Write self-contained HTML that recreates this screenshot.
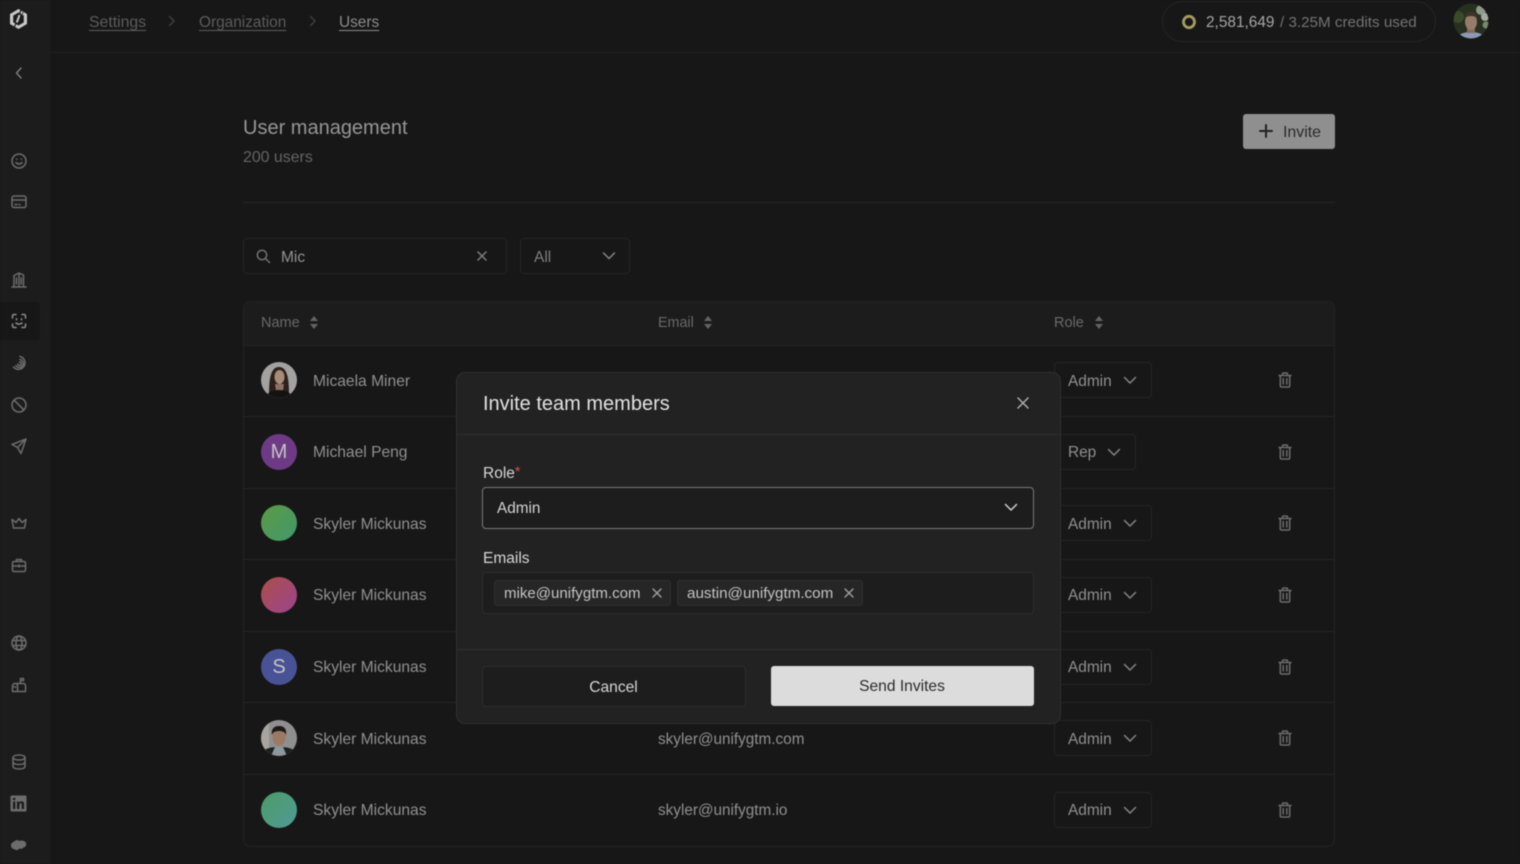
<!DOCTYPE html>
<html><head><meta charset="utf-8"><title>User management</title>
<style>
html,body{margin:0;padding:0;width:1520px;height:864px;overflow:hidden;background:#171717;font-family:"Liberation Sans",sans-serif;color:#8a8a8a}
*{box-sizing:border-box}
#w{position:absolute;left:0;top:0;width:1520px;height:864px;overflow:hidden;background:#171717;filter:blur(.4px)}
.a{position:absolute}
.t{position:absolute;white-space:nowrap;line-height:20px;font-size:15px;margin-top:1px}
.ic{position:absolute;fill:none;stroke:#6c6c6c;stroke-width:1.5;stroke-linecap:round;stroke-linejoin:round}
.line{position:absolute;left:244px;width:1090px;height:1px;background:#242424}
.av{position:absolute;left:261px;width:36px;height:36px;border-radius:50%;text-align:center;line-height:37px;font-size:20px;color:#c4c4c4}
.name{left:313px;color:#909090;font-size:15.6px}
.sel{position:absolute;left:1054px;height:36px;border:1px solid #252525;border-radius:4px}
.role{left:1068px;color:#909090;font-size:15.4px}
</style></head><body><div id="w">

<!-- sidebar -->
<div class="a" style="left:0;top:0;width:50px;height:864px;background:#1c1c1c;border-right:1px solid #1f1f1f"></div>
<div class="a" style="left:50px;top:52px;width:1470px;height:1px;background:#202020"></div>
<div class="a" style="left:0;top:302px;width:40px;height:38px;background:#171717;border-radius:0 4px 4px 0"></div>

<svg class="a" style="left:8px;top:8px" width="21" height="22" viewBox="0 0 21 22" fill="none"><path d="M10.500 1 19 6V16L10.500 21 2 16V6Z" fill="#c8c8c8"/><path d="M10.500 4.500 15.800 7.600V14.400L10.500 17.500 5.200 14.400V7.600Z" fill="#1c1c1c"/><path d="M13 2 6.500 19" stroke="#1c1c1c" stroke-width="1.200"/><path d="M11.500 7 8.800 14.500" stroke="#c8c8c8" stroke-width="2"/><path d="M15 4 11 17" stroke="#1c1c1c" stroke-width=".8"/></svg>
<svg class="ic" style="left:12px;top:66px;stroke:#7c7c7c" width="14" height="14" viewBox="0 0 14 14"><path d="M9 2 4.500 7 9 12"/></svg>
<!-- smile -->
<svg class="ic" style="left:10px;top:152px" width="18" height="18" viewBox="0 0 18 18"><circle cx="9" cy="9" r="7"/><path d="M6 10.500c1.500 2 4.500 2 6 0M6.700 7h.1M11.300 7h.1"/></svg>
<!-- card -->
<svg class="ic" style="left:10px;top:193px" width="18" height="18" viewBox="0 0 18 18"><rect x="2" y="3" width="14" height="11.500" rx="2"/><path d="M2 7h14M5 11.500h2M9 11.500h1"/></svg>
<!-- building -->
<svg class="ic" style="left:10px;top:271px" width="18" height="18" viewBox="0 0 18 18"><path d="M2 16h14M4 16V4.500l5-2.500 4.500 2V16M9 2v14M6.500 7v6M11.300 7v6"/></svg>
<!-- face scan -->
<svg class="ic" style="left:10px;top:312px;stroke:#8c8c8c" width="18" height="18" viewBox="0 0 18 18"><path d="M2.500 6V4a1.500 1.500 0 0 1 1.500-1.500h2M12 2.500h2A1.500 1.500 0 0 1 15.500 4v2M15.500 12v2a1.500 1.500 0 0 1-1.500 1.500h-2M6 15.500H4A1.500 1.500 0 0 1 2.500 14v-2M6.500 6.700v1M11.500 6.700v1M6 11c1.800 1.500 4.200 1.500 6 0"/></svg>
<!-- spiral -->
<svg class="ic" style="left:10px;top:354px" width="18" height="18" viewBox="0 0 18 18"><path d="M10 2.500A6.500 6.500 0 1 1 3.500 13M10 5.500A4 4 0 1 1 5.800 11.500M9.500 8A1.700 1.700 0 1 1 7.800 10.200"/></svg>
<!-- ban -->
<svg class="ic" style="left:10px;top:396px" width="18" height="18" viewBox="0 0 18 18"><circle cx="9" cy="9" r="7"/><path d="M4.200 4.200 13.800 13.800"/></svg>
<!-- send -->
<svg class="ic" style="left:10px;top:437px" width="18" height="18" viewBox="0 0 18 18"><path d="M16 2 2 7.500 7.500 10.500 11 16.500ZM7.500 10.500 16 2"/></svg>
<!-- crown -->
<svg class="ic" style="left:10px;top:514px" width="18" height="18" viewBox="0 0 18 18"><path d="M3.500 14h11L16 5.500l-4 3L9 4.500 6 8.500l-4-3Z"/></svg>
<!-- briefcase -->
<svg class="ic" style="left:10px;top:556px" width="18" height="18" viewBox="0 0 18 18"><rect x="2.500" y="5.500" width="13" height="10" rx="1.500"/><path d="M6.500 5.500V3.500h5v2M2.500 10h13M9 9v2"/></svg>
<!-- globe -->
<svg class="ic" style="left:10px;top:634px" width="18" height="18" viewBox="0 0 18 18"><circle cx="9" cy="9" r="7"/><ellipse cx="9" cy="9" rx="3" ry="7"/><path d="M2.500 6.500h13M2.500 11.500h13"/></svg>
<!-- mailbox -->
<svg class="ic" style="left:10px;top:676px" width="18" height="18" viewBox="0 0 18 18"><path d="M2.500 15.500V10a2.500 2.500 0 0 1 2.500-2.500h8.500a2 2 0 0 1 2 2v6ZM5 7.500A2.500 2.500 0 0 1 7.500 10v5.500M10.500 7.500V2.500h3v2h-3M4 11h1.500"/></svg>
<!-- database -->
<svg class="ic" style="left:10px;top:753px" width="18" height="18" viewBox="0 0 18 18"><ellipse cx="9" cy="4.500" rx="6" ry="2.500"/><path d="M3 4.500v9C3 15 5.700 16 9 16s6-1 6-2.500v-9M3 9c0 1.500 2.700 2.500 6 2.500S15 10.500 15 9"/></svg>
<!-- linkedin -->
<svg class="a" style="left:10px;top:795px" width="17" height="17" viewBox="0 0 17 17"><rect x=".5" y=".5" width="16" height="16" rx="1" fill="#6c6c6c"/><rect x="3" y="6.500" width="2.300" height="7.500" fill="#1c1c1c"/><circle cx="4.150" cy="4" r="1.300" fill="#1c1c1c"/><path d="M7 6.500h2.200v1.100c.6-.9 1.400-1.300 2.400-1.300 1.800 0 2.400 1.200 2.400 3V14h-2.300V9.800c0-.9-.3-1.500-1.100-1.500-.8 0-1.300.6-1.300 1.500V14H7Z" fill="#1c1c1c"/></svg>
<!-- salesforce cloud -->
<svg class="a" style="left:10px;top:838px" width="17" height="15" viewBox="0 0 17 14"><path d="M1 7c0-2 1-3 2.500-3.500C5 1.500 8 1 9.500 2.500c1.500-1 5.500-.5 6.500 2 .8 2-.5 4-2.500 4.500-1 1.500-3 1.500-4 1-1.500 2-4.500 2-5 .5C2.500 11 1 9 1 7Z" fill="#6c6c6c"/></svg>

<!-- top bar -->
<span class="t" style="left:89px;top:12px;color:#5c5c5c;font-size:15.800px;text-decoration:underline;text-underline-offset:3px;text-decoration-thickness:1px">Settings</span>
<svg class="ic" style="left:165px;top:14px;stroke:#3e3e3e" width="14" height="14" viewBox="0 0 14 14"><path d="M4.500 2.500 9 7 4.500 11.500"/></svg>
<span class="t" style="left:199px;top:12px;color:#5c5c5c;font-size:15.400px;text-decoration:underline;text-underline-offset:3px;text-decoration-thickness:1px">Organization</span>
<svg class="ic" style="left:306px;top:14px;stroke:#3e3e3e" width="14" height="14" viewBox="0 0 14 14"><path d="M4.500 2.500 9 7 4.500 11.500"/></svg>
<span class="t" style="left:339px;top:12px;color:#8c8c8c;font-size:15.400px;text-decoration:underline;text-underline-offset:3px;text-decoration-thickness:1px">Users</span>

<div class="a" style="left:1162px;top:1px;width:274px;height:41px;border:1px solid #242424;border-radius:21px"></div>
<svg class="a" style="left:1181px;top:14px" width="16" height="16" viewBox="0 0 16 16" fill="none"><ellipse cx="8" cy="8" rx="5.500" ry="5.700" stroke="#a89a60" stroke-width="2.800"/><path d="M4.500 6.500C5.500 4.800 7.500 4.500 9.500 5.500" stroke="#1c1c1c" stroke-width=".8"/></svg>
<span class="t" style="left:1206px;top:12px;color:#a6a6a6;font-size:15.400px">2,581,649</span>
<span class="t" style="left:1280px;top:12px;color:#737373;font-size:15.200px">/ 3.25M credits used</span>
<svg class="a" style="left:1453px;top:3px" width="36" height="36" viewBox="0 0 36 36"><defs><clipPath id="c1"><circle cx="18" cy="18" r="17.500"/></clipPath></defs><g clip-path="url(#c1)"><rect width="36" height="36" fill="#28301f"/><circle cx="5" cy="14" r="6" fill="#3a4a2a"/><circle cx="28" cy="7" r="5" fill="#8d9a8a"/><circle cx="32" cy="14" r="4" fill="#a3aba0"/><circle cx="33" cy="22" r="3.500" fill="#79876f"/><path d="M4 36c1-5 7-7 14-7s13 2 14 7Z" fill="#8b9bb5"/><rect x="14" y="24" width="8" height="6" fill="#86695a"/><ellipse cx="18" cy="19" rx="6" ry="8" fill="#977b6b"/><path d="M11.500 17c-.5-6 3-8.500 6.500-8.500s7 2.500 6.500 8.500c-1-3-3-4-6.500-4s-5.500 1-6.500 4Z" fill="#3f3226"/></g></svg>

<!-- header -->
<span class="t" style="left:243px;top:115px;font-size:20px;line-height:24px;color:#969696">User management</span>
<span class="t" style="left:243px;top:147px;color:#646464;font-size:15.900px">200 users</span>
<div class="a" style="left:1243px;top:114px;width:92px;height:35px;background:#8f8f8f;border-radius:3px"></div>
<svg class="ic" style="left:1258px;top:123px;stroke:#222;stroke-width:2" width="16" height="16" viewBox="0 0 16 16"><path d="M8 2v12M2 8h12"/></svg>
<span class="t" style="left:1283px;top:122px;color:#2a2a2a;font-size:15.900px">Invite</span>
<div class="a" style="left:243px;top:202px;width:1092px;height:1px;background:#262626"></div>

<!-- filters -->
<div class="a" style="left:243px;top:238px;width:264px;height:36px;border:1px solid #242424;border-radius:4px"></div>
<svg class="ic" style="left:255px;top:248px;stroke:#707070" width="16" height="16" viewBox="0 0 16 16"><circle cx="7" cy="7" r="4.700"/><path d="M10.500 10.500 14.500 14.500"/></svg>
<span class="t" style="left:281px;top:247px;color:#929292;font-size:15.500px">Mic</span>
<svg class="ic" style="left:475px;top:249px;stroke:#7c7c7c" width="14" height="14" viewBox="0 0 14 14"><path d="M3 3 11 11M11 3 3 11"/></svg>
<div class="a" style="left:520px;top:238px;width:110px;height:36px;border:1px solid #242424;border-radius:4px"></div>
<span class="t" style="left:534px;top:247px;color:#7e7e7e;font-size:15.500px">All</span>
<svg class="ic" style="left:601px;top:248px;stroke:#858585" width="16" height="16" viewBox="0 0 16 16"><path d="M2.500 5 8 10.500 13.500 5"/></svg>

<!-- table -->
<div class="a" style="left:243px;top:301px;width:1092px;height:546px;border:1px solid #232323;border-radius:7px"></div>
<div class="a" style="left:244px;top:302px;width:1090px;height:43px;background:#1c1c1c;border-radius:6px 6px 0 0"></div>
<div class="line" style="top:345px"></div><div class="line" style="top:416px"></div><div class="line" style="top:488px"></div><div class="line" style="top:559px"></div><div class="line" style="top:631px"></div><div class="line" style="top:702px"></div><div class="line" style="top:774px"></div>

<span class="t" style="left:261px;top:312px;color:#6a6a6a;font-size:14.500px">Name</span>
<svg class="a" style="left:309px;top:315px" width="10" height="15" viewBox="0 0 10 15"><path d="M5 1 9 6H1ZM5 14 1 9H9Z" fill="#646464"/></svg>
<span class="t" style="left:658px;top:312px;color:#6a6a6a;font-size:14.300px">Email</span>
<svg class="a" style="left:703px;top:315px" width="10" height="15" viewBox="0 0 10 15"><path d="M5 1 9 6H1ZM5 14 1 9H9Z" fill="#646464"/></svg>
<span class="t" style="left:1054px;top:312px;color:#6a6a6a;font-size:14.500px">Role</span>
<svg class="a" style="left:1094px;top:315px" width="10" height="15" viewBox="0 0 10 15"><path d="M5 1 9 6H1ZM5 14 1 9H9Z" fill="#646464"/></svg>

<!-- avatars -->
<svg class="a" style="left:261px;top:362px" width="36" height="36" viewBox="0 0 36 36"><defs><clipPath id="c2"><circle cx="18" cy="18" r="18"/></clipPath></defs><g clip-path="url(#c2)"><rect width="36" height="36" fill="#a2a2a2"/><path d="M8 32c0-16 2-27 10-27s10 11 10 27Z" fill="#2c211b"/><ellipse cx="18.500" cy="15" rx="5" ry="7" fill="#a98a78"/><path d="M14 22h9l-1 7H15Z" fill="#8f7262"/><path d="M5 36c1-6 6-8 13-8s12 2 13 8Z" fill="#141312"/></g></svg>
<div class="av" style="top:434px;background:#6e3a85">M</div>
<div class="av" style="top:505px;background:linear-gradient(135deg,#5c9a45,#42996c)"></div>
<div class="av" style="top:577px;background:linear-gradient(135deg,#ab4f47,#9c4490)"></div>
<div class="av" style="top:649px;background:#4a5297">S</div>
<svg class="a" style="left:261px;top:720px" width="36" height="36" viewBox="0 0 36 36"><defs><clipPath id="c3"><circle cx="18" cy="18" r="18"/></clipPath></defs><g clip-path="url(#c3)"><rect width="36" height="36" fill="#8f8f8f"/><rect x="0" y="0" width="8" height="36" fill="#a8a4a0"/><path d="M0 36c1-7 8-9 18-9s17 2 18 9Z" fill="#1c2022"/><path d="M10 36l4-9h8l4 9Z" fill="#8e979c"/><ellipse cx="18" cy="17" rx="6.500" ry="9" fill="#9a7a64"/><path d="M11 15c-1-7 3-9 7-9s8 2 7 9c-1-3-3-4-7-4s-6 1-7 4Z" fill="#1d1715"/></g></svg>
<div class="av" style="top:792px;background:linear-gradient(135deg,#4d9c68,#4f9a96)"></div>

<span class="t name" style="top:371px">Micaela Miner</span>
<span class="t name" style="top:442px">Michael Peng</span>
<span class="t name" style="top:514px">Skyler Mickunas</span>
<span class="t name" style="top:585px">Skyler Mickunas</span>
<span class="t name" style="top:657px">Skyler Mickunas</span>
<span class="t name" style="top:729px">Skyler Mickunas</span>
<span class="t name" style="top:800px">Skyler Mickunas</span>

<span class="t" style="left:658px;top:729px;color:#909090;font-size:15.300px">skyler@unifygtm.com</span>
<span class="t" style="left:658px;top:800px;color:#909090;font-size:15.300px">skyler@unifygtm.io</span>

<!-- role selects -->
<div class="sel" style="top:362px;width:98px"></div>
<div class="sel" style="top:434px;width:82px"></div>
<div class="sel" style="top:505px;width:98px"></div>
<div class="sel" style="top:577px;width:98px"></div>
<div class="sel" style="top:649px;width:98px"></div>
<div class="sel" style="top:720px;width:98px"></div>
<div class="sel" style="top:792px;width:98px"></div>
<span class="t role" style="top:371px">Admin</span>
<span class="t role" style="top:442px">Rep</span>
<span class="t role" style="top:514px">Admin</span>
<span class="t role" style="top:585px">Admin</span>
<span class="t role" style="top:657px">Admin</span>
<span class="t role" style="top:729px">Admin</span>
<span class="t role" style="top:800px">Admin</span>
<svg class="ic" style="left:1122px;top:372px;stroke:#858585" width="16" height="16" viewBox="0 0 16 16"><path d="M2.500 5.500 8 11 13.500 5.500"/></svg>
<svg class="ic" style="left:1106px;top:444px;stroke:#858585" width="16" height="16" viewBox="0 0 16 16"><path d="M2.500 5.500 8 11 13.500 5.500"/></svg>
<svg class="ic" style="left:1122px;top:515px;stroke:#858585" width="16" height="16" viewBox="0 0 16 16"><path d="M2.500 5.500 8 11 13.500 5.500"/></svg>
<svg class="ic" style="left:1122px;top:587px;stroke:#858585" width="16" height="16" viewBox="0 0 16 16"><path d="M2.500 5.500 8 11 13.500 5.500"/></svg>
<svg class="ic" style="left:1122px;top:659px;stroke:#858585" width="16" height="16" viewBox="0 0 16 16"><path d="M2.500 5.500 8 11 13.500 5.500"/></svg>
<svg class="ic" style="left:1122px;top:730px;stroke:#858585" width="16" height="16" viewBox="0 0 16 16"><path d="M2.500 5.500 8 11 13.500 5.500"/></svg>
<svg class="ic" style="left:1122px;top:802px;stroke:#858585" width="16" height="16" viewBox="0 0 16 16"><path d="M2.500 5.500 8 11 13.500 5.500"/></svg>

<!-- trash -->
<svg class="ic" style="left:1276px;top:371px" width="18" height="18" viewBox="0 0 18 18"><path d="M3 4.500h12M6.500 4.500V3a1 1 0 0 1 1-1h3a1 1 0 0 1 1 1v1.500M4.300 4.500v10.200a1.300 1.300 0 0 0 1.300 1.300h6.800a1.300 1.300 0 0 0 1.300-1.300V4.500M7.200 7.500v5.500M10.800 7.500v5.500"/></svg>
<svg class="ic" style="left:1276px;top:443px" width="18" height="18" viewBox="0 0 18 18"><path d="M3 4.500h12M6.500 4.500V3a1 1 0 0 1 1-1h3a1 1 0 0 1 1 1v1.500M4.300 4.500v10.200a1.300 1.300 0 0 0 1.300 1.300h6.800a1.300 1.300 0 0 0 1.300-1.300V4.500M7.200 7.500v5.500M10.800 7.500v5.500"/></svg>
<svg class="ic" style="left:1276px;top:514px" width="18" height="18" viewBox="0 0 18 18"><path d="M3 4.500h12M6.500 4.500V3a1 1 0 0 1 1-1h3a1 1 0 0 1 1 1v1.500M4.300 4.500v10.200a1.300 1.300 0 0 0 1.300 1.300h6.800a1.300 1.300 0 0 0 1.300-1.300V4.500M7.200 7.500v5.500M10.800 7.500v5.500"/></svg>
<svg class="ic" style="left:1276px;top:586px" width="18" height="18" viewBox="0 0 18 18"><path d="M3 4.500h12M6.500 4.500V3a1 1 0 0 1 1-1h3a1 1 0 0 1 1 1v1.500M4.300 4.500v10.200a1.300 1.300 0 0 0 1.300 1.300h6.800a1.300 1.300 0 0 0 1.300-1.300V4.500M7.200 7.500v5.500M10.800 7.500v5.500"/></svg>
<svg class="ic" style="left:1276px;top:658px" width="18" height="18" viewBox="0 0 18 18"><path d="M3 4.500h12M6.500 4.500V3a1 1 0 0 1 1-1h3a1 1 0 0 1 1 1v1.500M4.300 4.500v10.200a1.300 1.300 0 0 0 1.300 1.300h6.800a1.300 1.300 0 0 0 1.300-1.300V4.500M7.200 7.500v5.500M10.800 7.500v5.500"/></svg>
<svg class="ic" style="left:1276px;top:729px" width="18" height="18" viewBox="0 0 18 18"><path d="M3 4.500h12M6.500 4.500V3a1 1 0 0 1 1-1h3a1 1 0 0 1 1 1v1.500M4.300 4.500v10.200a1.300 1.300 0 0 0 1.300 1.300h6.800a1.300 1.300 0 0 0 1.300-1.300V4.500M7.200 7.500v5.500M10.800 7.500v5.500"/></svg>
<svg class="ic" style="left:1276px;top:801px" width="18" height="18" viewBox="0 0 18 18"><path d="M3 4.500h12M6.500 4.500V3a1 1 0 0 1 1-1h3a1 1 0 0 1 1 1v1.500M4.300 4.500v10.200a1.300 1.300 0 0 0 1.300 1.300h6.800a1.300 1.300 0 0 0 1.300-1.300V4.500M7.200 7.500v5.500M10.800 7.500v5.500"/></svg>

<!-- modal -->
<div class="a" style="left:456px;top:372px;width:605px;height:352px;background:#222;border:1px solid #2f2f2f;border-radius:9px"></div>
<div class="a" style="left:457px;top:434px;width:603px;height:1px;background:#303030"></div>
<div class="a" style="left:457px;top:649px;width:603px;height:1px;background:#303030"></div>
<span class="t" style="left:483px;top:391px;font-size:20px;line-height:24px;color:#e2e2e2">Invite team members</span>
<svg class="ic" style="left:1015px;top:395px;stroke:#adadad" width="16" height="16" viewBox="0 0 16 16"><path d="M3 3 13 13M13 3 3 13"/></svg>

<span class="t" style="left:483px;top:462px;font-size:15.500px;color:#d6d6d6">Role<span style="color:#d9534f;font-size:14px;position:relative;top:-2px">*</span></span>
<div class="a" style="left:482px;top:487px;width:552px;height:42px;background:#1d1d1d;border:1px solid #7a7a7a;border-radius:4px"></div>
<span class="t" style="left:497px;top:498px;font-size:15.300px;color:#d4d4d4">Admin</span>
<svg class="ic" style="left:1003px;top:499px;stroke:#cecece" width="16" height="16" viewBox="0 0 16 16"><path d="M2.500 5.500 8 11 13.500 5.500"/></svg>

<span class="t" style="left:483px;top:548px;font-size:15.500px;color:#d6d6d6">Emails</span>
<div class="a" style="left:482px;top:572px;width:552px;height:42px;background:#1d1d1d;border:1px solid #2d2d2d;border-radius:4px"></div>
<div class="a" style="left:494px;top:580px;width:177px;height:26px;background:#262626;border:1px solid #2e2e2e;border-radius:3px"></div>
<span class="t" style="left:504px;top:583px;font-size:15.060px;color:#c4c4c4">mike@unifygtm.com</span>
<svg class="ic" style="left:651px;top:587px;stroke:#9c9c9c" width="12" height="12" viewBox="0 0 12 12"><path d="M2 2 10 10M10 2 2 10"/></svg>
<div class="a" style="left:677px;top:580px;width:186px;height:26px;background:#262626;border:1px solid #2e2e2e;border-radius:3px"></div>
<span class="t" style="left:687px;top:583px;font-size:15.200px;color:#c4c4c4">austin@unifygtm.com</span>
<svg class="ic" style="left:843px;top:587px;stroke:#9c9c9c" width="12" height="12" viewBox="0 0 12 12"><path d="M2 2 10 10M10 2 2 10"/></svg>

<div class="a" style="left:482px;top:666px;width:264px;height:41px;background:#1d1d1d;border:1px solid #2d2d2d;border-radius:4px;text-align:center;line-height:41px;font-size:15.600px;color:#d6d6d6;padding-right:1px">Cancel</div>
<div class="a" style="left:771px;top:666px;width:263px;height:40px;background:#dcdcdc;border-radius:3px;text-align:center;line-height:42px;font-size:15.600px;color:#2a2a2a;padding-right:1px">Send Invites</div>

</div></body></html>
